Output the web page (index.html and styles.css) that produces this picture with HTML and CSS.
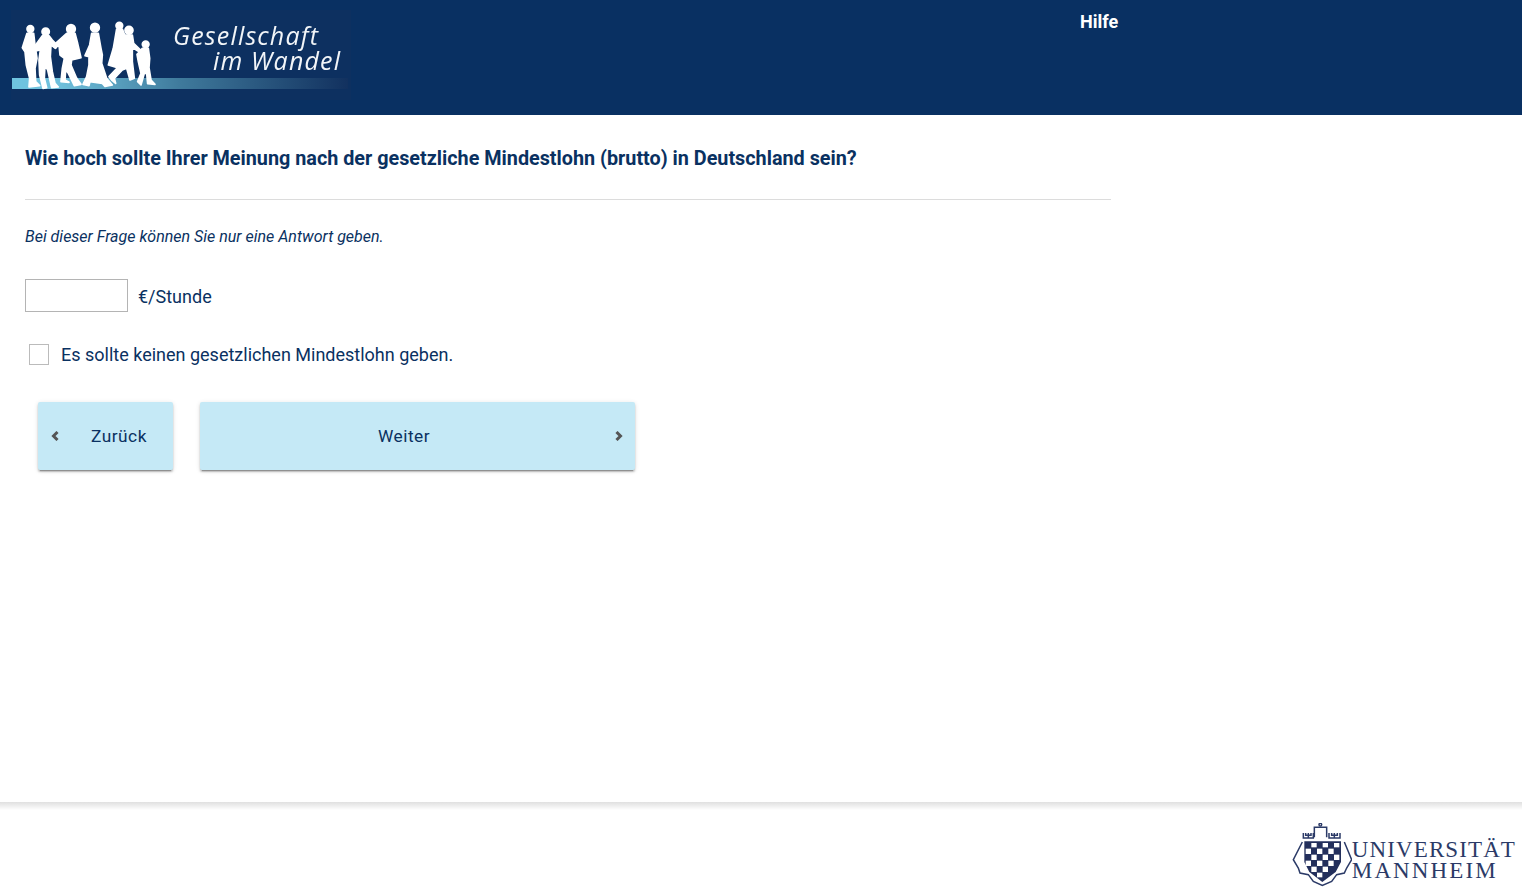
FILE: index.html
```html
<!DOCTYPE html>
<html lang="de">
	<head>
		<meta charset="UTF-8" />
		<title>Gesellschaft im Wandel</title>
		<link rel="stylesheet" href="styles.css">
	</head>
	<body>
		<div class="header">
			<svg class="logo" viewBox="11 10 340 90" width="340" height="90">
				<defs>
					<linearGradient id="stripe" x1="0" x2="1" y1="0" y2="0">
						<stop offset="0" stop-color="#6fc4e0" />
						<stop offset="0.14" stop-color="#6fc0dc" />
						<stop offset="0.5" stop-color="#3f7a9c" />
						<stop offset="1" stop-color="#12315f" />
					</linearGradient>
				</defs>
				<rect x="11" y="10" width="340" height="90" fill="#0d3060" />
				<rect x="12" y="78" width="336" height="11" fill="url(#stripe)" />
				<g class="figures" transform="translate(15 15) scale(0.3333)">
					<circle cx="46" cy="42" r="10" />
					<path d="M36 55 56 55 60 90 66 130 60 160 62 200 74 212 42 216 44 190 34 150 30 110 22 98Z" />
					<circle cx="92" cy="50" r="11" />
					<path d="M82 62 102 62 112 75 128 92 122 100 108 90 106 125 112 170 120 205 130 216 110 218 98 165 90 150 88 190 95 218 84 220 74 180 72 135 76 105 62 108 58 95Z" />
					<circle cx="168" cy="42" r="13" />
					<path d="M155 55 180 55 188 85 198 128 170 135 168 150 185 190 198 208 178 212 160 175 152 165 150 195 162 202 138 200 142 160 148 130 135 120 132 90 118 98 116 90Z" />
					<circle cx="240" cy="38" r="13" />
					<path d="M230 55 250 55 258 100 262 120 260 145 275 190 292 210 270 214 262 205 225 200 222 212 204 208 215 185 222 150 222 125 210 122 224 90Z" />
					<circle cx="313" cy="32" r="10" />
					<path d="M305 42 322 42 330 62 322 120 325 145 315 160 280 150 295 100Z" />
					<circle cx="342" cy="46" r="12" />
					<path d="M330 60 352 60 356 85 380 108 376 113 352 98 352 140 358 190 345 195 335 160 322 165 298 190 302 205 290 195 282 185 315 150 322 100Z" />
					<circle cx="392" cy="88" r="10" />
					<path d="M382 100 400 100 404 130 402 158 408 195 420 208 398 206 395 175 388 175 378 210 368 200 378 175 370 140 366 118 372 112Z" />
				</g>
				<text class="logo-text" x="173" y="45" textLength="145">Gesellschaft</text>
				<text class="logo-text" x="213" y="70" textLength="127">im Wandel</text>
			</svg>
			<div class="nav"><a href="#">Hilfe</a></div>
		</div>

		<div class="content">
			<h1>Wie hoch sollte Ihrer Meinung nach der gesetzliche Mindestlohn (brutto) in Deutschland sein?</h1>
			<hr />
			<p class="hint">Bei dieser Frage können Sie nur eine Antwort geben.</p>

			<div class="answer">
				<input type="text" class="amount" />
				<label>€/Stunde</label>
			</div>

			<div class="option">
				<span class="checkbox"></span>
				<label>Es sollte keinen gesetzlichen Mindestlohn geben.</label>
			</div>

			<div class="button-container">
				<button class="btn back">
					<svg class="chevron" viewBox="0 0 8 10" width="8" height="10"><path d="M6.500 1 2.500 5 6.500 9" /></svg>
					<span>Zurück</span>
				</button>
				<button class="btn next">
					<span>Weiter</span>
					<svg class="chevron" viewBox="0 0 8 10" width="8" height="10"><path d="M1.500 1 5.500 5 1.500 9" /></svg>
				</button>
			</div>
		</div>

		<div class="footer">
			<div class="uni">
				<svg class="crest" viewBox="21 15 180 192" width="60" height="64">
					<g fill="none" stroke="#2b3a67" stroke-width="4.500">
						<path d="M55 45V60H85V45M62 45V52H78V45M70 45V60" />
						<path d="M132 45V60H165V45M140 45V52H157V45M148 45V60" />
						<path d="M88 58V28H125V58" />
						<circle cx="106" cy="20" r="4" />
						<path d="M52 72 25 125 40 150 45 165 70 170 85 190 112 202 140 190 155 170 178 165 185 150 200 125 178 72" />
					</g>
					<path class="shield" d="M58 70H168V132L152 162 112 192 73 162 58 132Z" />
					<g fill="#ffffff">
						<rect x="79" y="75" width="16" height="13" />
						<rect x="113" y="75" width="16" height="13" />
						<rect x="147" y="75" width="16" height="13" />
						<rect x="62" y="92" width="16" height="16" />
						<rect x="96" y="92" width="16" height="16" />
						<rect x="130" y="92" width="16" height="16" />
						<rect x="79" y="110" width="16" height="16" />
						<rect x="113" y="110" width="16" height="16" />
						<rect x="147" y="110" width="16" height="16" />
						<rect x="62" y="128" width="16" height="16" />
						<rect x="96" y="128" width="16" height="16" />
						<rect x="130" y="128" width="16" height="16" />
						<rect x="79" y="146" width="16" height="16" />
						<rect x="113" y="146" width="16" height="16" />
						<rect x="96" y="164" width="16" height="14" />
					</g>
				</svg>
				<div class="uni-name">
					<span class="uni-top">UNIVERSITÄT</span>
					<span class="uni-bottom">MANNHEIM</span>
				</div>
			</div>
		</div>
	</body>
</html>
```

FILE: styles.css
```css
html, body {
	height: 100%;
}

body {
	margin: 0;
	display: flex;
	flex-direction: column;
	min-height: 893px;
	box-sizing: border-box;
	background-color: white;
	color: #0a3161;
	font-family: Roboto, sans-serif;
}

.header {
	display: flex;
	align-items: flex-start;
	height: 115px;
	padding: 10px 0 0 11px;
	box-sizing: border-box;
	background-color: #093062;
}

.logo {
	display: block;
	flex: none;
	filter: blur(0.5px);
}

.figures {
	fill: #ffffff;
	stroke: #ffffff;
	stroke-width: 5;
	stroke-linejoin: round;
}

.logo-text {
	fill: #f2f5f8;
	font-family: "Open Sans", sans-serif;
	font-size: 25px;
	font-style: italic;
	font-weight: 400;
}

.nav {
	margin-left: 729px;
	line-height: 24px;
}

.nav a {
	color: white;
	font-size: 18px;
	font-weight: 700;
	text-decoration: none;
}

.content {
	flex: 1;
	width: 1086px;
	padding-left: 25px;
}

h1 {
	margin: 32px 0 28px;
	font-size: 19.8px;
	line-height: 24px;
	font-weight: 700;
}

hr {
	margin: 0;
	border: none;
	border-top: 1px solid #dcdcdc;
}

.hint {
	margin: 28px 0 33px;
	font-size: 16px;
	line-height: 18px;
	font-style: italic;
}

.answer {
	display: flex;
	align-items: center;
	gap: 10px;
	font-size: 18px;
}

.answer label {
	padding-top: 2px;
}

.amount {
	width: 103px;
	height: 33px;
	padding: 0;
	box-sizing: border-box;
	border: 1px solid #b4b4b4;
	background: white;
}

.option {
	display: flex;
	align-items: center;
	gap: 12px;
	margin: 32px 0 0 4px;
	font-size: 18px;
}

.checkbox {
	width: 20px;
	height: 21px;
	box-sizing: border-box;
	border: 1px solid #bbbbbb;
}

.button-container {
	display: flex;
	gap: 27px;
	margin: 37px 0 0 13px;
}

.btn {
	display: flex;
	align-items: center;
	height: 68px;
	padding: 0 12px;
	box-sizing: border-box;
	border: none;
	border-radius: 2px;
	background-color: #c5e9f6;
	color: #0a3161;
	font-family: Roboto, sans-serif;
	font-size: 17.3px;
	letter-spacing: 0.5px;
	box-shadow: 0 2px 2px 0 rgba(0, 0, 0, 0.2), 0 3px 1px -2px rgba(0, 0, 0, 0.25), 0 1px 5px 0 rgba(0, 0, 0, 0.12);
}

.back {
	width: 135px;
	padding-left: 13px;
}

.back span {
	margin-left: 32px;
}

.next {
	width: 435px;
	justify-content: space-between;
}

.next span {
	margin-left: 166px;
}

.chevron {
	fill: none;
	stroke: #555555;
	stroke-width: 3;
}

.footer {
	display: flex;
	justify-content: flex-end;
	height: 91px;
	box-sizing: border-box;
	padding: 21px 6px 0 0;
	background: linear-gradient(#e0e0e0, #ebebeb 3px, white 8px);
}

.uni {
	display: flex;
	align-items: flex-start;
}

.crest {
	display: block;
	filter: blur(0.4px);
}

.shield {
	fill: #232f5c;
}

.uni-name {
	margin-top: 16px;
	color: #2b3a67;
	font-family: "Liberation Serif", serif;
	font-size: 23px;
	line-height: 21px;
}

.uni-top, .uni-bottom {
	display: block;
}

.uni-top {
	letter-spacing: 1.1px;
}

.uni-bottom {
	letter-spacing: 2.1px;
}
```
